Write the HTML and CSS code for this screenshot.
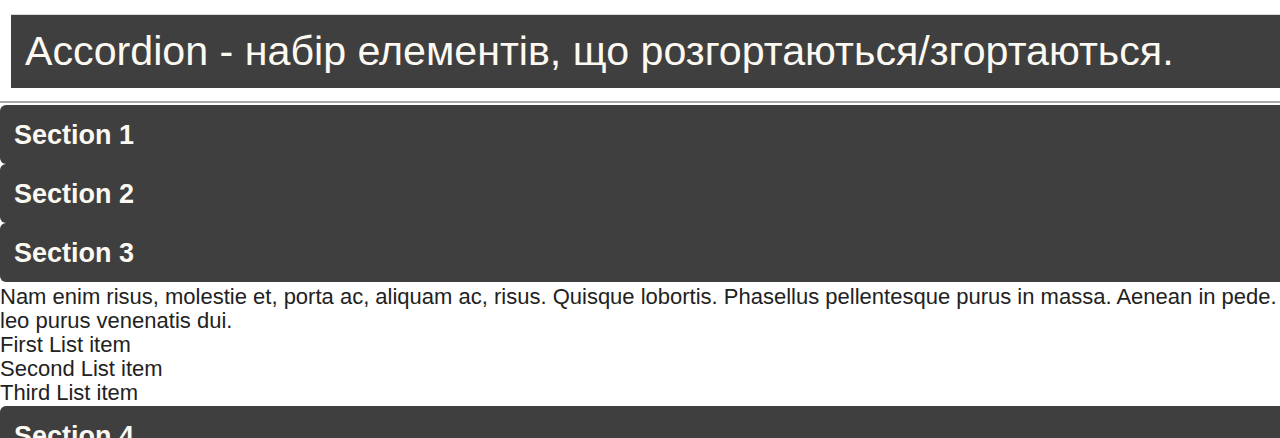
FILE: index.html
```html
<!DOCTYPE html>
<html lang="uk">
<head>
<meta charset="utf-8">
<title>Accordion</title>
<link rel="stylesheet" href="styles.css">
</head>
<body>
<div class="page">
  <h1 class="title">Accordion - набір елементів, що розгортаються/згортаються.</h1>
  <div class="accordion">
    <h3 class="acc-header">Section 1</h3>
    <h3 class="acc-header">Section 2</h3>
    <h3 class="acc-header">Section 3</h3>
    <div class="acc-content">
      <p class="acc-text">Nam enim risus, molestie et, porta ac, aliquam ac, risus. Quisque lobortis. Phasellus pellentesque purus in massa. Aenean in pede. Phasellus ac libero ac tellus pellentesque semper. Sed ac felis. Sed commodo, magna quis lacinia ornare, quam ante aliquam nisi, eu iaculis<br>leo purus venenatis dui.</p>
      <ul class="acc-list">
        <li>First List item</li>
        <li>Second List item</li>
        <li>Third List item</li>
      </ul>
    </div>
    <h3 class="acc-header">Section 4</h3>
  </div>
</div>
</body>
</html>
```
FILE: styles.css
```css
html, body {
  margin: 0;
  padding: 0;
  overflow: hidden;
  background: #ffffff;
}
.page {
  width: 2900px;
  font-family: "Liberation Sans", Arial, sans-serif;
  color: #222222;
}
.title {
  margin: 14px 0 0 11px;
  height: 74px;
  line-height: 72px;
  padding: 0 0 0 14px;
  background: #403f3f;
  color: #fbf9f1;
  font-size: 41.2px;
  font-weight: normal;
  border-top: 1px solid #d8d8d8;
  box-sizing: border-box;
}
.accordion {
  margin-top: 13px;
  border-top: 2px solid #a8a8a8;
  padding-top: 2px;
}
.acc-header {
  margin: 0;
  height: 59px;
  line-height: 60px;
  padding-left: 14px;
  background: #403f3f;
  color: #fbf9f1;
  font-size: 27px;
  font-weight: bold;
  border-radius: 6px;
}
.acc-content {
  padding: 3px 0 1px;
  font-size: 22px;
  line-height: 24px;
}
.acc-text {
  margin: 0;
  white-space: nowrap;
}
.acc-list {
  margin: 0;
  padding: 0;
  list-style: none;
}
```
